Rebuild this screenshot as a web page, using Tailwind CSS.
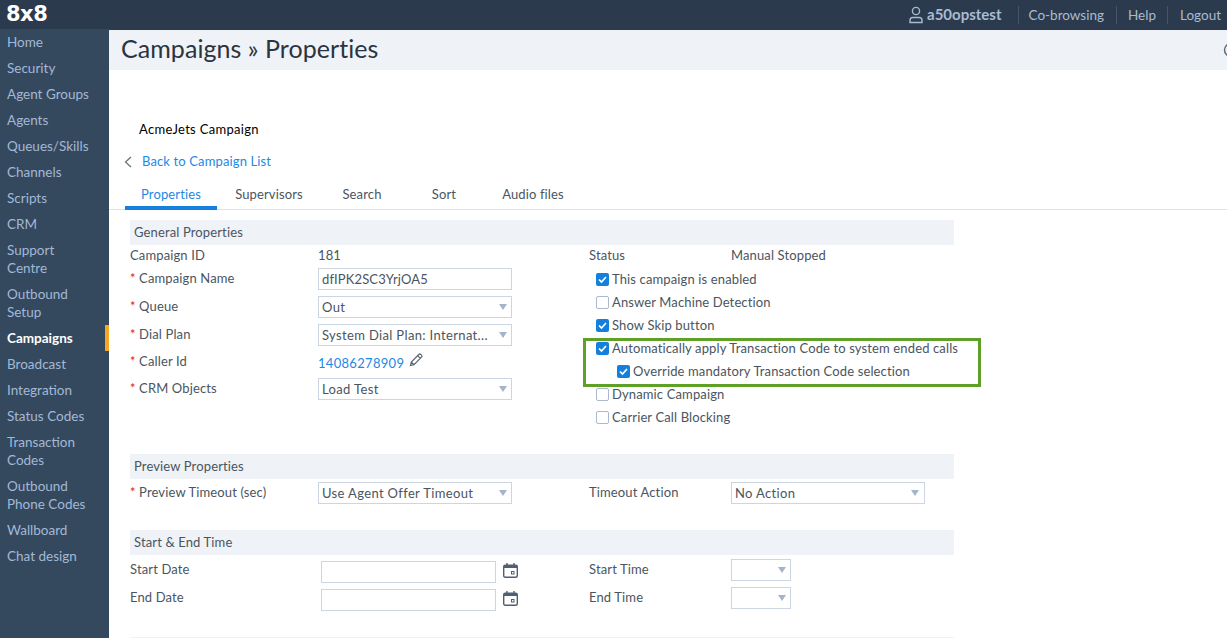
<!doctype html>
<html>
  <head>
    <meta charset="utf-8">
    <title>Campaigns</title>
    <script src="https://cdn.jsdelivr.net/npm/@tailwindcss/browser@4"></script>
  </head>
  <body class="h-[638px] overflow-hidden bg-white font-['Lato',sans-serif] text-[13px] tracking-[0.13px] text-[#4a5560]">
    <!-- Top bar -->
    <header class="h-[29px] bg-[#2b3a4c] flex items-center justify-between">
      <div class="pl-[6px] font-['DejaVu_Sans',sans-serif] font-bold text-[21px] leading-[27px] text-white tracking-[-0.5px]">8x8</div>
      <div class="flex items-center text-[13.5px] tracking-normal text-[#a9bbd3] pr-[6px]">
        <svg class="w-[16px] h-[18px] mr-[3px]" viewBox="0 0 16 18" fill="none" stroke="#a9bbd3" stroke-width="1.4">
          <circle cx="8" cy="5" r="3.6"/>
          <path d="M2 16.5v-2.2c0-1.6 1.2-2.8 2.8-2.8h6.4c1.6 0 2.8 1.2 2.8 2.8v2.2z"/>
        </svg>
        <span class="text-[15px] font-bold pr-[16px]">a50opstest</span>
        <span class="border-l border-[#43566c] pl-[10px] pr-[12px] leading-[18px]">Co-browsing</span>
        <span class="border-l border-[#43566c] pl-[11px] pr-[11px] leading-[18px]">Help</span>
        <span class="border-l border-[#43566c] pl-[12px] leading-[18px]">Logout</span>
      </div>
    </header>

    <div class="flex h-[609px]">
      <!-- Sidebar -->
      <nav class="w-[109px] shrink-0 bg-[#34495e] text-[13.5px] tracking-normal leading-[18px] text-[#a3b8d6]">
        <a class="block px-[7px] py-[4px]">Home</a>
        <a class="block px-[7px] py-[4px]">Security</a>
        <a class="block px-[7px] py-[4px]">Agent Groups</a>
        <a class="block px-[7px] py-[4px]">Agents</a>
        <a class="block px-[7px] py-[4px]">Queues/Skills</a>
        <a class="block px-[7px] py-[4px]">Channels</a>
        <a class="block px-[7px] py-[4px]">Scripts</a>
        <a class="block px-[7px] py-[4px]">CRM</a>
        <a class="block px-[7px] py-[4px]">Support<br>Centre</a>
        <a class="block px-[7px] py-[4px]">Outbound<br>Setup</a>
        <a class="block px-[7px] py-[4px] font-bold text-white border-r-[4px] border-[#f5a623]">Campaigns</a>
        <a class="block px-[7px] py-[4px]">Broadcast</a>
        <a class="block px-[7px] py-[4px]">Integration</a>
        <a class="block px-[7px] py-[4px]">Status Codes</a>
        <a class="block px-[7px] py-[4px]">Transaction<br>Codes</a>
        <a class="block px-[7px] py-[4px]">Outbound<br>Phone Codes</a>
        <a class="block px-[7px] py-[4px]">Wallboard</a>
        <a class="block px-[7px] py-[4px]">Chat design</a>
      </nav>

      <!-- Main -->
      <main class="flex-1 min-w-0 overflow-hidden">
        <div class="h-[41px] bg-[#eff2f7] border-t border-[#2b3a4c] flex items-center justify-between pl-[12px] pb-[5px] overflow-hidden">
          <h1 class="text-[25px] tracking-[0.05px] leading-[36px] text-[#2b3440]">Campaigns » Properties</h1>
          <svg class="w-[16px] h-[16px] mr-[-12px] mt-[5px] shrink-0" viewBox="0 0 16 16" fill="none" stroke="#5a6570" stroke-width="1.4"><circle cx="8" cy="8" r="6.5"/></svg>
        </div>

        <div class="pl-[30px] pt-[49px] text-black tracking-[0.3px] leading-[20px]">AcmeJets Campaign</div>

        <div class="flex items-center pl-[15px] pt-[13px] h-[32px] text-[#1e88e5]">
          <svg class="w-[8px] h-[12px] mr-[10px]" viewBox="0 0 8 12" fill="none" stroke="#6b7580" stroke-width="1.3"><path d="M7 1 1.5 6 7 11"/></svg>
          <span>Back to Campaign List</span>
        </div>

        <!-- Tabs -->
        <div class="flex h-[32px] mt-[7px] border-b border-[#dfe3e8] pl-[16px] text-[#4a5560]">
          <div class="w-[92px] h-[32px] flex justify-center pt-[7px] leading-[18px] text-[#1e88e5] border-b-[4px] border-[#1580dc]">Properties</div>
          <div class="w-[104px] text-center pt-[7px] leading-[18px]">Supervisors</div>
          <div class="w-[82px] text-center pt-[7px] leading-[18px]">Search</div>
          <div class="w-[82px] text-center pt-[7px] leading-[18px]">Sort</div>
          <div class="w-[96px] text-center pt-[7px] leading-[18px]">Audio files</div>
        </div>

        <div class="ml-[21px] w-[824px] mt-[10px]">
          <!-- General Properties -->
          <div class="h-[25px] bg-[#eff2f7] pl-[4px] leading-[24px]">General Properties</div>
          <div class="grid grid-cols-[459px_1fr]">
            <div class="flex flex-col gap-[6px]">
              <div class="h-[17px] flex leading-[20px]">
                <span class="w-[188px]">Campaign ID</span><span>181</span>
              </div>
              <div class="h-[22px] flex">
                <label class="w-[188px] leading-[20px]"><span class="text-[#e02020]">*</span> Campaign Name</label>
                <div class="w-[194px] h-[22px] border border-[#ccd6e2] px-[3px] leading-[20px]">dfIPK2SC3YrjOA5</div>
              </div>
              <div class="h-[22px] flex">
                <label class="w-[188px] leading-[20px]"><span class="text-[#e02020]">*</span> Queue</label>
                <div class="w-[194px] h-[22px] border border-[#ccd6e2] pl-[3px] pr-[4px] tracking-[0.35px] leading-[20px] flex items-center justify-between"><span>Out</span><i class="block w-0 h-0 border-x-[4px] border-x-transparent border-t-[6px] border-t-[#a3b4cc]"></i></div>
              </div>
              <div class="h-[22px] flex">
                <label class="w-[188px] leading-[20px]"><span class="text-[#e02020]">*</span> Dial Plan</label>
                <div class="w-[194px] h-[22px] border border-[#ccd6e2] pl-[3px] pr-[4px] tracking-[0.35px] leading-[20px] flex items-center justify-between"><span class="whitespace-nowrap">System Dial Plan: Internat...</span><i class="block w-0 h-0 border-x-[4px] border-x-transparent border-t-[6px] border-t-[#a3b4cc]"></i></div>
              </div>
              <div class="h-[20px] flex">
                <label class="w-[188px] leading-[18px]"><span class="text-[#e02020]">*</span> Caller Id</label>
                <div class="flex leading-[22px] tracking-[0.3px] text-[#1e88e5]">14086278909
                  <svg class="w-[14px] h-[14px] ml-[5px] mt-[1px]" viewBox="0 0 14 14" fill="none" stroke="#5a6570" stroke-width="1.2"><path d="M1.5 12.5 2.3 9 9.8 1.5c.6-.6 1.4-.6 2 0l.7.7c.6.6.6 1.4 0 2L5 11.7zM2.3 9 5 11.7M8.6 2.7l2.7 2.7"/></svg>
                </div>
              </div>
              <div class="h-[22px] flex">
                <label class="w-[188px] leading-[20px]"><span class="text-[#e02020]">*</span> CRM Objects</label>
                <div class="w-[194px] h-[22px] border border-[#ccd6e2] pl-[3px] pr-[4px] tracking-[0.35px] leading-[20px] flex items-center justify-between"><span>Load Test</span><i class="block w-0 h-0 border-x-[4px] border-x-transparent border-t-[6px] border-t-[#a3b4cc]"></i></div>
              </div>
            </div>

            <div class="relative">
              <div class="h-[23px] flex leading-[20px]"><span class="w-[142px]">Status</span><span>Manual Stopped</span></div>
              <div class="h-[23px] pl-[7px] flex items-center gap-[3px]">
                <span class="w-[13px] h-[13px] rounded-[2px] bg-[#1580dc] flex items-center justify-center"><svg class="w-[9px] h-[9px]" viewBox="0 0 9 9" fill="none" stroke="white" stroke-width="1.7"><path d="M1 4.5 3.5 7 8 2"/></svg></span>
                <span>This campaign is enabled</span>
              </div>
              <div class="h-[23px] pl-[7px] flex items-center gap-[3px]">
                <span class="w-[13px] h-[13px] rounded-[2px] border border-[#a9b9cf] bg-white"></span>
                <span>Answer Machine Detection</span>
              </div>
              <div class="h-[23px] pl-[7px] flex items-center gap-[3px]">
                <span class="w-[13px] h-[13px] rounded-[2px] bg-[#1580dc] flex items-center justify-center"><svg class="w-[9px] h-[9px]" viewBox="0 0 9 9" fill="none" stroke="white" stroke-width="1.7"><path d="M1 4.5 3.5 7 8 2"/></svg></span>
                <span>Show Skip button</span>
              </div>
              <div class="h-[23px] pl-[7px] flex items-center gap-[3px]">
                <span class="w-[13px] h-[13px] rounded-[2px] bg-[#1580dc] flex items-center justify-center"><svg class="w-[9px] h-[9px]" viewBox="0 0 9 9" fill="none" stroke="white" stroke-width="1.7"><path d="M1 4.5 3.5 7 8 2"/></svg></span>
                <span class="whitespace-nowrap">Automatically apply Transaction Code to system ended calls</span>
              </div>
              <div class="h-[23px] pl-[28px] flex items-center gap-[3px]">
                <span class="w-[13px] h-[13px] rounded-[2px] bg-[#1580dc] flex items-center justify-center"><svg class="w-[9px] h-[9px]" viewBox="0 0 9 9" fill="none" stroke="white" stroke-width="1.7"><path d="M1 4.5 3.5 7 8 2"/></svg></span>
                <span class="whitespace-nowrap">Override mandatory Transaction Code selection</span>
              </div>
              <div class="h-[23px] pl-[7px] flex items-center gap-[3px]">
                <span class="w-[13px] h-[13px] rounded-[2px] border border-[#a9b9cf] bg-white"></span>
                <span>Dynamic Campaign</span>
              </div>
              <div class="h-[23px] pl-[7px] flex items-center gap-[3px]">
                <span class="w-[13px] h-[13px] rounded-[2px] border border-[#a9b9cf] bg-white"></span>
                <span>Carrier Call Blocking</span>
              </div>
              <!-- Green annotation box -->
              <div class="absolute left-[-6px] top-[93px] w-[398px] h-[49px] border-[3px] border-[#5fa127]"></div>
            </div>
          </div>

          <!-- Preview Properties -->
          <div class="h-[25px] mt-[25px] bg-[#eff2f7] pl-[4px] leading-[24px]">Preview Properties</div>
          <div class="grid grid-cols-[459px_1fr] mt-[3px]">
            <div class="h-[22px] flex">
              <label class="w-[188px] leading-[20px]"><span class="text-[#e02020]">*</span> Preview Timeout (sec)</label>
              <div class="w-[194px] h-[22px] border border-[#ccd6e2] pl-[3px] pr-[4px] tracking-[0.35px] leading-[20px] flex items-center justify-between"><span>Use Agent Offer Timeout</span><i class="block w-0 h-0 border-x-[4px] border-x-transparent border-t-[6px] border-t-[#a3b4cc]"></i></div>
            </div>
            <div class="h-[22px] flex">
              <label class="w-[142px] leading-[20px]">Timeout Action</label>
              <div class="w-[194px] h-[22px] border border-[#ccd6e2] pl-[3px] pr-[5px] tracking-[0.35px] leading-[20px] flex items-center justify-between"><span>No Action</span><i class="block w-0 h-0 border-x-[4px] border-x-transparent border-t-[6px] border-t-[#a3b4cc]"></i></div>
            </div>
          </div>

          <!-- Start & End Time -->
          <div class="h-[25px] mt-[26px] bg-[#eff2f7] pl-[4px] leading-[24px]">Start &amp; End Time</div>
          <div class="grid grid-cols-[459px_1fr] mt-[4px]">
            <div class="flex flex-col gap-[6px] pt-[2px]">
              <div class="h-[22px] flex">
                <label class="w-[191px] leading-[16px]">Start Date</label>
                <div class="w-[175px] h-[22px] border border-[#ccd6e2]"></div>
                <svg class="w-[15px] h-[15px] ml-[7px] mt-[2px]" viewBox="0 0 15 15" fill="none" stroke="#4f6075" stroke-width="1.4"><rect x="0.7" y="2.2" width="13.6" height="12" rx="1.5"/><path d="M1 4.2h13M1 3.4h13M4 0v2.5M11 0v2.5"/><rect x="8.5" y="8.5" width="2.5" height="2.5" stroke-width="1"/></svg>
              </div>
              <div class="h-[22px] flex">
                <label class="w-[191px] leading-[16px]">End Date</label>
                <div class="w-[175px] h-[22px] border border-[#ccd6e2]"></div>
                <svg class="w-[15px] h-[15px] ml-[7px] mt-[2px]" viewBox="0 0 15 15" fill="none" stroke="#4f6075" stroke-width="1.4"><rect x="0.7" y="2.2" width="13.6" height="12" rx="1.5"/><path d="M1 4.2h13M1 3.4h13M4 0v2.5M11 0v2.5"/><rect x="8.5" y="8.5" width="2.5" height="2.5" stroke-width="1"/></svg>
              </div>
            </div>
            <div class="flex flex-col gap-[6px]">
              <div class="h-[22px] flex">
                <label class="w-[142px] leading-[20px]">Start Time</label>
                <div class="w-[60px] h-[22px] border border-[#ccd6e2] pr-[4px] flex items-center justify-end"><i class="block w-0 h-0 border-x-[4px] border-x-transparent border-t-[6px] border-t-[#a3b4cc]"></i></div>
              </div>
              <div class="h-[22px] flex">
                <label class="w-[142px] leading-[20px]">End Time</label>
                <div class="w-[60px] h-[22px] border border-[#ccd6e2] pr-[4px] flex items-center justify-end"><i class="block w-0 h-0 border-x-[4px] border-x-transparent border-t-[6px] border-t-[#a3b4cc]"></i></div>
              </div>
            </div>
          </div>
          <div class="mt-[26px] border-t border-[#eff2f7]"></div>
        </div>
      </main>
    </div>
  </body>
</html>
